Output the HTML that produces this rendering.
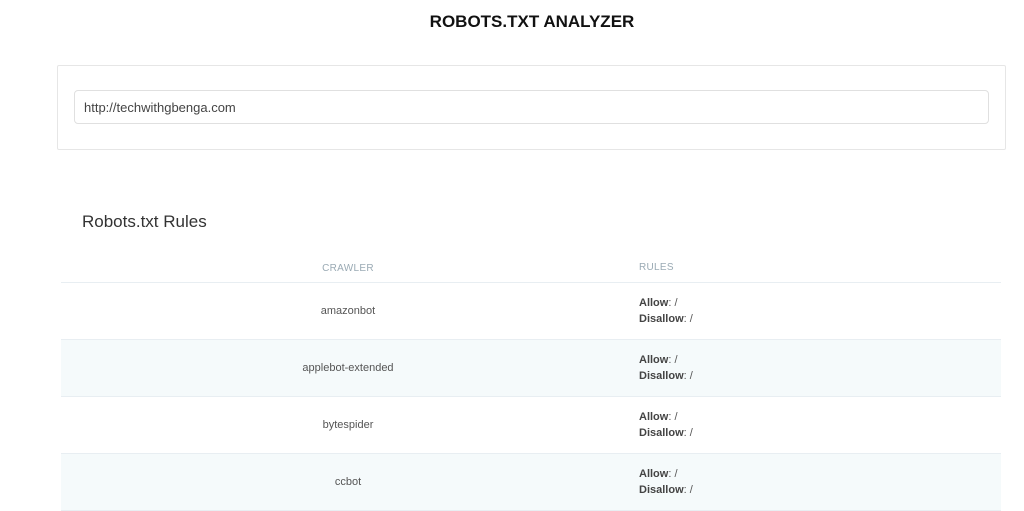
<!DOCTYPE html>
<html><head><meta charset="utf-8"><style>
*{box-sizing:border-box;margin:0;padding:0}
body{width:1024px;height:510px;overflow:hidden;background:#fff;font-family:"Liberation Sans",Arial,sans-serif;color:#333;position:relative}
h1{position:absolute;top:12px;left:20px;width:1024px;text-align:center;font-size:17px;font-weight:bold;color:#111;letter-spacing:0}
.card{position:absolute;left:57px;top:65px;width:949px;height:85px;border:1px solid #e6e6e6;border-radius:2px}
.inp{position:absolute;left:16px;top:24px;width:915px;height:34px;border:1px solid #e0e0e0;border-radius:4px;font-size:13px;color:#444;padding:9px 9px}
h2{position:absolute;left:82px;top:212px;font-size:17px;font-weight:normal;color:#333}
table{position:absolute;left:61px;top:255px;width:940px;border-collapse:collapse}
th{height:27px;font-size:10px;font-weight:normal;color:#9aaab4;letter-spacing:0.3px;border-bottom:1px solid #e8eef2}
td{height:57px;font-size:11px;color:#555;border-bottom:1px solid #e8eef2}
tr.alt td{background:#f5fafb}
.c1{width:574px;text-align:center}
.c2{padding-left:4px;text-align:left;line-height:16px;color:#555}
b{color:#444}
</style></head><body>
<h1>ROBOTS.TXT ANALYZER</h1>
<div class="card"><div class="inp">http://techwithgbenga.com</div></div>
<h2>Robots.txt Rules</h2>
<table>
<tr><th class="c1">CRAWLER</th><th class="c2" style="color:#9aaab4">RULES</th></tr>
<tr><td class="c1">amazonbot</td><td class="c2"><b>Allow</b>: /<br><b>Disallow</b>: /</td></tr>
<tr class="alt"><td class="c1">applebot-extended</td><td class="c2"><b>Allow</b>: /<br><b>Disallow</b>: /</td></tr>
<tr><td class="c1">bytespider</td><td class="c2"><b>Allow</b>: /<br><b>Disallow</b>: /</td></tr>
<tr class="alt"><td class="c1">ccbot</td><td class="c2"><b>Allow</b>: /<br><b>Disallow</b>: /</td></tr>
</table>
</body></html>
